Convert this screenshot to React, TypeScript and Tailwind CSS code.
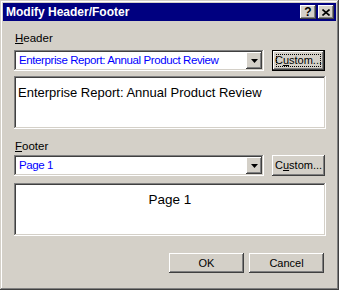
import React from "react";

const FONT = { fontFamily: '"Liberation Sans", Arial, sans-serif' };

const raised =
  "shadow-[inset_-1px_-1px_#404040,inset_1px_1px_#ffffff,inset_-2px_-2px_#808080,inset_2px_2px_#d4d0c8]";
const sunken =
  "shadow-[inset_-1px_-1px_#ffffff,inset_1px_1px_#808080,inset_-2px_-2px_#d4d0c8,inset_2px_2px_#404040]";

function TitleButton({ children }: { children: React.ReactNode }) {
  return (
    <div
      className={`w-[16px] h-[14px] bg-[#d4d0c8] flex items-center justify-center ${raised}`}
    >
      {children}
    </div>
  );
}

function Combo({ value }: { value: string }) {
  return (
    <div className={`w-[251px] h-[21px] bg-white flex items-center p-[2px] ${sunken}`}>
      <span className="flex-1 pl-[3px] text-[11.5px] tracking-[-0.4px] text-[#0000ff] leading-none">
        {value}
      </span>
      <div className={`w-[16px] h-[17px] bg-[#d4d0c8] flex items-center justify-center ${raised}`}>
        <svg width="7" height="4" viewBox="0 0 7 4">
          <path d="M0 0h7L3.5 4z" fill="#000" />
        </svg>
      </div>
    </div>
  );
}

function Btn({
  children,
  focused,
  className = "",
}: {
  children: React.ReactNode;
  focused?: boolean;
  className?: string;
}) {
  if (focused) {
    return (
      <div className={`border border-black ${className}`}>
        <div
          className={`w-full h-full bg-[#d4d0c8] flex items-center justify-center p-[3px] shadow-[inset_-1px_-1px_#404040,inset_1px_1px_#ffffff,inset_-2px_-2px_#808080]`}
        >
          <div className="w-full h-full border border-dotted border-black flex items-center justify-center text-[11px] leading-none">
            {children}
          </div>
        </div>
      </div>
    );
  }
  return (
    <div
      className={`bg-[#d4d0c8] flex items-center justify-center text-[11px] leading-none ${raised} ${className}`}
    >
      {children}
    </div>
  );
}

export default function App() {
  return (
    <div
      style={FONT}
      className="w-[339px] h-[290px] bg-[#d4d0c8] p-[3px] flex flex-col text-black shadow-[inset_-1px_-1px_#404040,inset_1px_1px_#d4d0c8,inset_-2px_-2px_#808080,inset_2px_2px_#ffffff]"
    >
      {/* Title bar */}
      <div className="h-[18px] bg-[#000080] flex items-center justify-between pl-[3px] pr-[2px]">
        <span className="text-white font-bold text-[12px] leading-none">Modify Header/Footer</span>
        <div className="flex gap-[2px]">
          <TitleButton>
            <span className="font-bold text-[12px] leading-none">?</span>
          </TitleButton>
          <TitleButton>
            <svg width="8" height="7" viewBox="0 0 8 7">
              <path d="M0.5 0.5L7.5 6.5M7.5 0.5L0.5 6.5" stroke="#000" strokeWidth="1.6" />
            </svg>
          </TitleButton>
        </div>
      </div>

      <div className="flex-1 px-[11px] pt-[12px] flex flex-col">
        {/* Header */}
        <div className="text-[11.5px] leading-none pl-[1px] h-[12px]">
          <span className="underline">H</span>eader
        </div>
        <div className="flex items-center mt-[5px] gap-[8px]">
          <Combo value="Enterprise Report: Annual Product Review" />
          <Btn focused className="w-[53px] h-[21px]">
            <span>
              C<span className="underline">u</span>stom...
            </span>
          </Btn>
        </div>
        <div className={`mt-[5px] w-[312px] h-[53px] bg-white px-[4px] pt-[4px] ${sunken}`}>
          <span className="text-[13px] leading-none">Enterprise Report: Annual Product Review</span>
        </div>

        {/* Footer */}
        <div className="text-[11.5px] leading-none pl-[1px] h-[12px] mt-[12px]">
          <span className="underline">F</span>ooter
        </div>
        <div className="flex items-center mt-[2px] gap-[8px]">
          <Combo value="Page 1" />
          <Btn className="w-[53px] h-[21px]">
            <span>
              C<span className="underline">u</span>stom...
            </span>
          </Btn>
        </div>
        <div className={`mt-[7px] w-[312px] h-[53px] bg-white pt-[4px] text-center ${sunken}`}>
          <span className="text-[13.5px] leading-none">Page 1</span>
        </div>

        <div className="flex justify-end gap-[5px] mt-[17px] pr-[1px]">
          <Btn className="w-[75px] h-[20px]">OK</Btn>
          <Btn className="w-[75px] h-[20px]">Cancel</Btn>
        </div>
      </div>
    </div>
  );
}
